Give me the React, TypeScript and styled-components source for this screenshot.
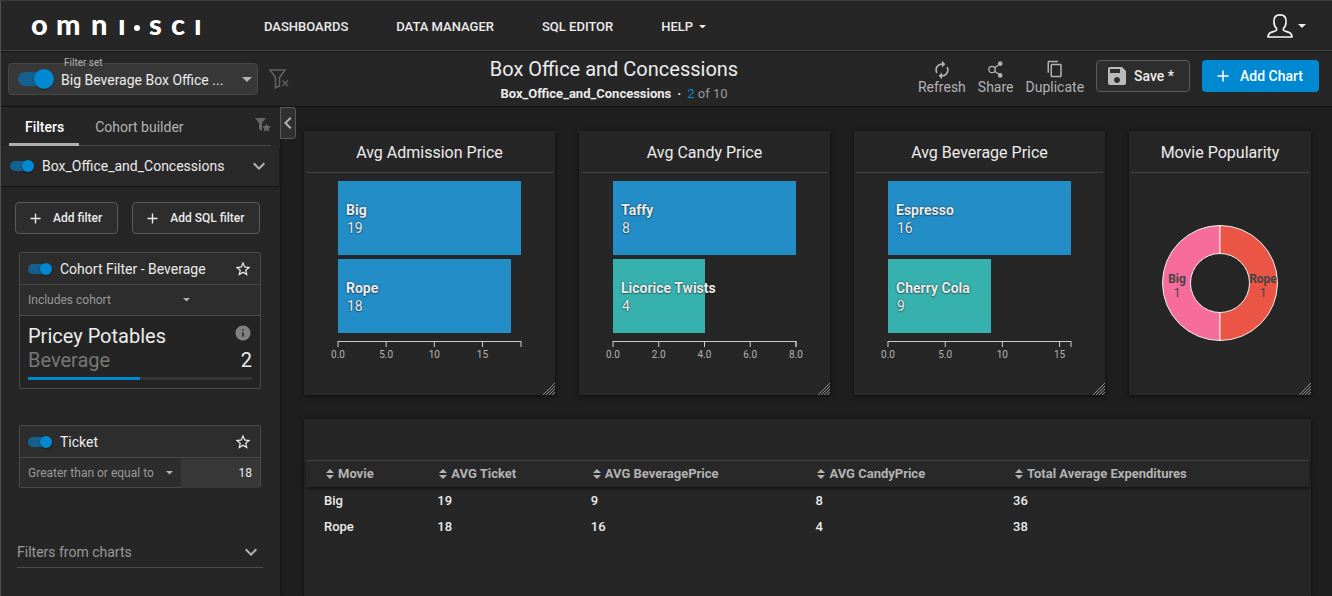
import React from "react";
import styled, { createGlobalStyle, css } from "styled-components";
import {
  MdAutorenew,
  MdChevronLeft,
  MdContentCopy,
  MdExpandMore,
  MdInfo,
  MdSave,
  MdStarBorder,
} from "react-icons/md";

const c = {
  page: "#1e1e1e",
  panel: "#262626",
  raised: "#2d2d2d",
  field: "#383838",
  line: "#444444",
  strong: "#ececec",
  muted: "#b3b3b3",
  dim: "#999999",
  faint: "#777777",
  blue: "#0088d1",
  track: "#14608e",
  barBlue: "#238dc8",
  barTeal: "#36b1ad",
  pink: "#f66d9b",
  red: "#ea5545",
};

const GlobalStyle = createGlobalStyle`
  *, *::before, *::after { box-sizing: border-box; }
  body {
    margin: 0;
    background: ${c.page};
    color: ${c.strong};
    font-family: Roboto, "Liberation Sans", sans-serif;
    font-size: 14px;
    -webkit-font-smoothing: antialiased;
  }
  button, select, input { font: inherit; color: inherit; margin: 0; }
  button { cursor: pointer; padding: 0; }
  a { color: inherit; text-decoration: none; }
  h1, h2, p { margin: 0; font-weight: 400; }
  svg { display: block; flex: none; }
`;

const Page = styled.div`
  display: flex;
  flex-direction: column;
  height: 100vh;
  min-height: 480px;
  overflow: hidden;
  background: ${c.page};
  border-top: 1px solid #3b3b3f;
  border-left: 1px solid #505050;
`;

/* ---------- top navigation ---------- */

const TopBar = styled.header`
  display: flex;
  align-items: center;
  flex: none;
  height: 50px;
  padding: 0 26px 0 30px;
  background: ${c.panel};
  border-bottom: 1px solid ${c.line};
`;

const LogoText = styled.text`
  font-family: Lato, sans-serif;
  font-weight: 900;
  font-size: 29px;
  fill: #ffffff;
`;

const Nav = styled.nav`
  display: flex;
  align-items: center;
  gap: 48px;
  margin-left: 50px;
  padding-top: 2px;
  font-size: 13px;
  font-weight: 500;
  line-height: 20px;
`;

const NavLink = styled.a`
  display: flex;
  align-items: center;
  gap: 6px;
  text-transform: uppercase;
`;

const UserButton = styled.button`
  display: flex;
  align-items: center;
  gap: 5px;
  margin-left: auto;
  background: none;
  border: 0;
`;

/* ---------- dashboard toolbar ---------- */

const Toolbar = styled.div`
  display: flex;
  flex: none;
  height: 56px;
  padding: 8px 13px 0 7px;
  background: ${c.panel};
  border-top: 1px solid #151515;
  border-bottom: 1px solid #131313;
`;

const FilterSetArea = styled.div`
  display: flex;
  align-items: center;
  flex: none;
  gap: 11px;
  width: 302px;
  height: 32px;
  margin-top: 3px;
`;

const FilterSetBox = styled.div`
  position: relative;
  display: flex;
  align-items: center;
  width: 250px;
  height: 32px;
  padding: 0 5px 0 9px;
  gap: 7px;
  background: ${c.field};
  border: 1px solid #474747;
  border-radius: 4px;
`;

const FilterSetLabel = styled.label`
  position: absolute;
  top: -7px;
  left: 55px;
  font-size: 10px;
  line-height: 12px;
  color: ${c.muted};
`;

const SelectWrap = styled.span<{ $caretRight?: number }>`
  display: grid;
  flex: 1;
  min-width: 0;
  align-items: center;
  > * { grid-area: 1 / 1; }
  > svg {
    justify-self: end;
    margin-right: ${(p) => p.$caretRight ?? 0}px;
    pointer-events: none;
  }
`;

const Select = styled.select<{ $small?: boolean }>`
  appearance: none;
  width: 100%;
  height: 30px;
  padding: ${(p) => (p.$small ? 0 : 2)}px 0 0;
  border: 0;
  outline: 0;
  background: none;
  font-size: ${(p) => (p.$small ? 12 : 14)}px;
  color: ${(p) => (p.$small ? c.dim : c.strong)};
`;

const Switch = styled.input<{ $large?: boolean }>`
  appearance: none;
  position: relative;
  flex: none;
  width: ${(p) => (p.$large ? 36 : 24)}px;
  height: ${(p) => (p.$large ? 20 : 12)}px;
  cursor: pointer;
  &::before {
    content: "";
    position: absolute;
    top: ${(p) => (p.$large ? 3 : 1)}px;
    left: 0;
    width: ${(p) => (p.$large ? 32 : 22)}px;
    height: ${(p) => (p.$large ? 14 : 10)}px;
    border-radius: 7px;
    background: ${c.track};
  }
  &::after {
    content: "";
    position: absolute;
    top: 0;
    right: 0;
    width: ${(p) => (p.$large ? 20 : 12)}px;
    height: ${(p) => (p.$large ? 20 : 12)}px;
    border-radius: 50%;
    background: ${c.blue};
    box-shadow: 0 1px 2px rgba(0, 0, 0, 0.4);
  }
`;

const Heading = styled.div`
  flex: 1;
  min-width: 0;
  text-align: center;
  white-space: nowrap;
`;

const Title = styled.h1`
  font-size: 20px;
  line-height: 18px;
`;

const SubTitle = styled.p`
  display: flex;
  justify-content: center;
  gap: 6px;
  margin-top: 7px;
  font-size: 13px;
  line-height: 18px;
  color: ${c.dim};
  strong { font-weight: 700; color: ${c.strong}; }
  b { font-weight: 400; color: ${c.blue}; }
`;

const Actions = styled.div`
  display: flex;
  align-items: flex-start;
  flex: none;
  gap: 12px;
`;

const ToolButton = styled.button`
  display: flex;
  flex-direction: column;
  align-items: center;
  gap: 1px;
  background: none;
  border: 0;
  font-size: 14px;
  line-height: 16px;
  color: ${c.muted};
`;

const IconSlot = styled.span`
  display: grid;
  place-items: center;
  height: 18px;
`;

const Button = styled.button<{ $primary?: boolean; $compact?: boolean }>`
  display: flex;
  align-items: center;
  height: 32px;
  border-radius: 4px;
  white-space: nowrap;
  ${(p) =>
    p.$primary
      ? css`
          padding: 0 16px 0 15px;
          gap: 11px;
          color: #ffffff;
          background: ${c.blue};
          border: 0;
        `
      : css`
          padding: 0 15px 0 ${p.$compact ? 14 : 8}px;
          gap: ${p.$compact ? 12 : 5}px;
          color: ${c.strong};
          background: ${c.raised};
          border: 1px solid #5a5a5a;
        `}
  font-size: ${(p) => (p.$compact ? 12 : 14)}px;
  font-weight: 500;
`;

/* ---------- sidebar ---------- */

const Body = styled.div`
  display: flex;
  flex: 1;
  min-height: 0;
`;

const Sidebar = styled.aside`
  flex: none;
  width: 279px;
  padding-right: 1px;
  background: ${c.panel};
  box-shadow: 1px 0 3px rgba(0, 0, 0, 0.35);
`;

const Tabs = styled.div`
  display: flex;
  height: 39px;
  margin: 0 8px;
  border-bottom: 1px solid #4a4a4a;
  > svg { margin: 11px 0 0 auto; }
`;

const Tab = styled.button<{ $active?: boolean }>`
  height: 39px;
  padding: 3px 15px 0 16px;
  background: none;
  border: 0;
  border-bottom: 3px solid ${(p) => (p.$active ? "#b0b0b0" : "transparent")};
  font-weight: ${(p) => (p.$active ? 500 : 400)};
  color: ${(p) => (p.$active ? "#ffffff" : c.muted)};
`;

const SourceRow = styled.div`
  display: flex;
  align-items: center;
  justify-content: space-between;
  height: 40px;
  padding: 0 8px 0 9px;
  background: #292929;
  box-shadow: 0 1px 2px rgba(0, 0, 0, 0.5);
`;

const SwitchLabel = styled.label`
  display: flex;
  align-items: center;
  gap: 8px;
`;

const PlainButton = styled.button`
  display: grid;
  place-items: center;
  background: none;
  border: 0;
  color: ${c.muted};
`;

const AddRow = styled.div`
  display: flex;
  gap: 14px;
  padding: 16px 14px 0;
`;

const FilterCard = styled.section`
  margin: 18px 18px 0;
  border: 1px solid #4a4a4a;
  border-radius: 2px;
  background: ${c.raised};
  & + & { margin-top: 36px; }
`;

const CardHead = styled.div`
  display: flex;
  align-items: center;
  justify-content: space-between;
  height: 32px;
  padding: 0 8px;
  border-bottom: 1px solid #4a4a4a;
`;

const CohortRow = styled.div`
  height: 31px;
  padding: 0 8px;
  display: flex;
  border-bottom: 1px solid #4a4a4a;
`;

const CohortBody = styled.div`
  padding: 8px;
  background: #242424;
  font-size: 20px;
  line-height: 24px;
`;

const SplitLine = styled.div<{ $faint?: boolean }>`
  display: flex;
  align-items: flex-start;
  justify-content: space-between;
  color: ${(p) => (p.$faint ? c.faint : c.strong)};
  b { font-weight: 400; color: ${c.strong}; }
`;

const Meter = styled.div`
  height: 3px;
  margin-top: 5px;
  background: #363636;
`;

const MeterFill = styled.div`
  height: 3px;
  background: ${c.blue};
`;

const ConditionRow = styled.div`
  display: grid;
  grid-template-columns: 161px 1fr;
  height: 29px;
  align-items: center;
`;

const ConditionSelect = styled.div`
  display: flex;
  padding: 0 8px;
`;

const ValueInput = styled.input`
  width: 100%;
  height: 29px;
  padding: 0 8px;
  border: 0;
  outline: 0;
  background: ${c.field};
  font-size: 12px;
  text-align: right;
`;

const ChartFilters = styled.button`
  display: flex;
  align-items: center;
  justify-content: space-between;
  width: 246px;
  height: 31px;
  margin: 49px 16px 0;
  background: none;
  border: 0;
  border-bottom: 1px solid #4a4a4a;
  color: ${c.dim};
  svg { color: ${c.muted}; }
`;

/* ---------- dashboard ---------- */

const Main = styled.main`
  position: relative;
  display: flex;
  flex: 1;
  flex-direction: column;
  gap: 24px;
  min-width: 0;
  padding: 24px 21px 0 24px;
`;

const CollapseButton = styled.button`
  position: absolute;
  top: 0;
  left: 0;
  display: grid;
  place-content: center;
  width: 16px;
  height: 32px;
  overflow: hidden;
  background: #303030;
  border: 1px solid #5a5a5a;
  border-radius: 0 3px 3px 0;
  color: ${c.muted};
`;

const Charts = styled.div`
  display: grid;
  flex: none;
  grid-template-columns: 251fr 251fr 251fr 182fr;
  gap: 24px;
`;

const Card = styled.section`
  position: relative;
  display: flex;
  flex-direction: column;
  padding: 0 2px;
  background: ${c.panel};
  box-shadow: 0 1px 4px rgba(0, 0, 0, 0.6);
`;

const ChartCard = styled(Card)`
  height: 264px;
`;

const TableCard = styled(Card)`
  flex: 1;
  min-height: 0;
`;

const CardTitle = styled.h2`
  flex: none;
  height: 42px;
  border-bottom: 1px solid ${c.line};
  font-size: 16px;
  line-height: 43px;
  text-align: center;
  white-space: nowrap;
`;

const Grip = styled.svg`
  position: absolute;
  right: 0;
  bottom: 0;
`;

const BarArea = styled.div`
  display: flex;
  flex-direction: column;
  gap: 4px;
  padding: 8px 32px 0;
`;

const Bar = styled.div`
  display: flex;
  flex-direction: column;
  justify-content: center;
  height: 74px;
  padding: 2px 8px 0;
  line-height: 18px;
  white-space: nowrap;
  text-shadow: 0 0 2px rgba(0, 0, 0, 0.6), 0 1px 1px rgba(0, 0, 0, 0.3);
  span { padding-left: 1px; }
`;

const AxisSvg = styled.svg`
  overflow: visible;
  margin-top: 4px;
  width: 100%;
  line { stroke: #cccccc; }
  text { fill: ${c.muted}; font-size: 10px; text-anchor: middle; }
`;

const DonutArea = styled.div`
  display: grid;
  flex: 1;
  place-items: center;
  padding-bottom: 2px;
`;

const DonutSvg = styled.svg`
  overflow: visible;
  path { stroke: #f2f2f2; }
  text { fill: #444444; font-size: 12px; text-anchor: middle; }
`;

const Table = styled.table`
  width: 100%;
  border-collapse: separate;
  border-spacing: 0;
  table-layout: fixed;
  font-size: 13px;
  line-height: 16px;
`;

const HeadRow = styled.tr`
  height: 26px;
  background: #282828;
  box-shadow: 0 2px 3px rgba(0, 0, 0, 0.45);
`;

const Th = styled.th`
  padding: 0 0 0 18px;
  text-align: left;
  font-weight: 700;
  color: ${c.muted};
`;

const SortButton = styled.button`
  display: flex;
  align-items: center;
  gap: 4px;
  padding-left: 2px;
  background: none;
  border: 0;
`;

const Td = styled.td`
  height: 26px;
  padding: 2px 0 0 18px;
  font-weight: 500;
`;

/* ---------- icons ---------- */

const Caret = ({ w = 8, color = c.strong }: { w?: number; color?: string }) => (
  <svg width={w} height={w / 2} viewBox="0 0 8 4" fill={color} aria-hidden>
    <path d="M0 0h8L4 4z" />
  </svg>
);

const Plus = ({ size = 12 }: { size?: number }) => (
  <svg width={size} height={size} viewBox="0 0 12 12" stroke="currentColor" strokeWidth="1.5" aria-hidden>
    <path d="M6 0.5v11M0.5 6h11" />
  </svg>
);

const Logo = () => (
  <svg width="183" height="44" viewBox="0 0 183 44" role="img" aria-label="omni·sci">
    <LogoText x="0 25 60 87" y="31">omnı</LogoText>
    <circle cx="106" cy="24" r="3" fill="#ffffff" />
    <LogoText x="118 140 163" y="31">scı</LogoText>
  </svg>
);

const UserIcon = () => (
  <svg width="26" height="24" viewBox="0 0 26 24" fill="none" stroke="#f5f5f5" strokeWidth="1.6" strokeLinejoin="round" aria-hidden>
    <path d="M9.6 14.6C7.9 13 6.9 10.600 6.900 7.400C6.900 3.400 9.300 0.900 13 0.900S19.100 3.400 19.100 7.400C19.100 10.600 18.100 13 16.400 14.600V16.200C17.500 17.300 20.200 17.600 22.200 18.500C24.200 19.400 24.900 20.700 25.100 23H0.900C1.100 20.700 1.800 19.400 3.800 18.500C5.800 17.600 8.500 17.300 9.600 16.200Z" />
  </svg>
);

const FilterClearIcon = () => (
  <svg width="21" height="20" viewBox="0 0 21 20" fill="none" stroke="#606060" strokeWidth="1.6" aria-hidden>
    <path d="M1 1H16L10.500 8.500V17L6.500 18.800V8.500Z" />
    <path d="M13.500 11.500L19 17M19 11.500L13.500 17" strokeWidth="1.300" />
  </svg>
);

const FilterStarIcon = () => (
  <svg width="16" height="14" viewBox="0 0 16 14" fill="#666666" aria-hidden>
    <path d="M0 0H11L7 5V13L4 11V5Z" />
    <path d="M11.500 5.400L12.900 8L15.900 8.500L13.700 10.600L14.200 13.600L11.500 12.200L8.800 13.600L9.300 10.600L7.100 8.500L10.100 8Z" />
  </svg>
);

const ShareIcon = () => (
  <svg width="15" height="17" viewBox="0 0 15 17" fill="none" stroke="currentColor" strokeWidth="1.3" aria-hidden>
    <circle cx="4" cy="8.500" r="3.200" />
    <path d="M6.700 6.800L12 3M6.700 10.200L12 14" />
    <circle cx="12.200" cy="2.600" r="1.700" fill="currentColor" />
    <circle cx="12.200" cy="14.400" r="1.700" fill="currentColor" />
  </svg>
);

const SortIcon = () => (
  <svg width="8" height="10" viewBox="0 0 8 10" fill="currentColor" aria-hidden>
    <path d="M0 4H8L4 0Z M0 6H8L4 10Z" />
  </svg>
);

const ResizeGrip = () => (
  <Grip width="12" height="12" viewBox="0 0 12 12" stroke="#8a8a8a" aria-hidden>
    <path d="M0 12L12 0M3 12L12 3M6 12L12 6M9 12L12 9" />
  </Grip>
);

/* ---------- charts ---------- */

type Datum = { name: string; value: number; color: string };
type BarChartProps = { title: string; max: number; ticks: [number, string][]; data: Datum[] };

const BarChart = ({ title, max, ticks, data }: BarChartProps) => (
  <ChartCard>
    <CardTitle>{title}</CardTitle>
    <BarArea>
      {data.map((d) => (
        <Bar key={d.name} style={{ width: `${(d.value / max) * 100}%`, background: d.color }}>
          <strong>{d.name}</strong>
          <span>{d.value}</span>
        </Bar>
      ))}
      <AxisSvg height="20">
        <line x1="0" x2="100%" y1="0.5" y2="0.5" />
        <line x1="100%" x2="100%" y1="0" y2="6" />
        {ticks.map(([v, label]) => (
          <React.Fragment key={label}>
            <line x1={`${(v / max) * 100}%`} x2={`${(v / max) * 100}%`} y1="0" y2="6" />
            <text x={`${(v / max) * 100}%`} y="17">{label}</text>
          </React.Fragment>
        ))}
      </AxisSvg>
    </BarArea>
    <ResizeGrip />
  </ChartCard>
);

const barCharts: BarChartProps[] = [
  {
    title: "Avg Admission Price",
    max: 19,
    ticks: [[0, "0.0"], [5, "5.0"], [10, "10"], [15, "15"]],
    data: [
      { name: "Big", value: 19, color: c.barBlue },
      { name: "Rope", value: 18, color: c.barBlue },
    ],
  },
  {
    title: "Avg Candy Price",
    max: 8,
    ticks: [[0, "0.0"], [2, "2.0"], [4, "4.0"], [6, "6.0"], [8, "8.0"]],
    data: [
      { name: "Taffy", value: 8, color: c.barBlue },
      { name: "Licorice Twists", value: 4, color: c.barTeal },
    ],
  },
  {
    title: "Avg Beverage Price",
    max: 16,
    ticks: [[0, "0.0"], [5, "5.0"], [10, "10"], [15, "15"]],
    data: [
      { name: "Espresso", value: 16, color: c.barBlue },
      { name: "Cherry Cola", value: 9, color: c.barTeal },
    ],
  },
];

const columns: [string, string][] = [
  ["Movie", "11.3%"],
  ["AVG Ticket", "15.3%"],
  ["AVG BeveragePrice", "22.4%"],
  ["AVG CandyPrice", "19.7%"],
  ["Total Average Expenditures", "31.3%"],
];

const rows = [
  ["Big", "19", "9", "8", "36"],
  ["Rope", "18", "16", "4", "38"],
];

export default function App() {
  return (
    <>
      <GlobalStyle />
      <Page>
        <TopBar>
          <Logo />
          <Nav>
            <NavLink href="#dashboards">Dashboards</NavLink>
            <NavLink href="#data">Data Manager</NavLink>
            <NavLink href="#sql">SQL Editor</NavLink>
            <NavLink href="#help">Help <Caret w={7} /></NavLink>
          </Nav>
          <UserButton aria-label="Account">
            <UserIcon />
            <Caret />
          </UserButton>
        </TopBar>

        <Toolbar>
          <FilterSetArea>
            <FilterSetBox>
              <FilterSetLabel htmlFor="filter-set">Filter set</FilterSetLabel>
              <Switch type="checkbox" $large defaultChecked aria-label="Enable filter set" />
              <SelectWrap>
                <Select id="filter-set">
                  <option>Big Beverage Box Office ...</option>
                </Select>
                <Caret w={10} color={c.muted} />
              </SelectWrap>
            </FilterSetBox>
            <PlainButton aria-label="Clear filters"><FilterClearIcon /></PlainButton>
          </FilterSetArea>
          <Heading>
            <Title>Box Office and Concessions</Title>
            <SubTitle>
              <strong>Box_Office_and_Concessions</strong>
              <strong>·</strong>
              <span><b>2</b> of 10</span>
            </SubTitle>
          </Heading>
          <Actions>
            <ToolButton><IconSlot><MdAutorenew size={20} /></IconSlot>Refresh</ToolButton>
            <ToolButton><IconSlot><ShareIcon /></IconSlot>Share</ToolButton>
            <ToolButton><IconSlot><MdContentCopy size={18} /></IconSlot>Duplicate</ToolButton>
            <Button><MdSave size={24} color="#bbbbbb" />Save *</Button>
            <Button $primary><Plus />Add Chart</Button>
          </Actions>
        </Toolbar>

        <Body>
          <Sidebar>
            <Tabs>
              <Tab $active>Filters</Tab>
              <Tab>Cohort builder</Tab>
              <FilterStarIcon />
            </Tabs>
            <SourceRow>
              <SwitchLabel>
                <Switch type="checkbox" defaultChecked />
                Box_Office_and_Concessions
              </SwitchLabel>
              <PlainButton aria-label="Collapse source"><MdExpandMore size={24} /></PlainButton>
            </SourceRow>
            <AddRow>
              <Button $compact><Plus size={11} />Add filter</Button>
              <Button $compact><Plus size={11} />Add SQL filter</Button>
            </AddRow>

            <FilterCard>
              <CardHead>
                <SwitchLabel>
                  <Switch type="checkbox" defaultChecked />
                  Cohort Filter - Beverage
                </SwitchLabel>
                <PlainButton aria-label="Favorite cohort filter"><MdStarBorder size={18} color="#f0f0f0" /></PlainButton>
              </CardHead>
              <CohortRow>
                <SelectWrap $caretRight={62}>
                  <Select $small aria-label="Cohort condition">
                    <option>Includes cohort</option>
                  </Select>
                  <Caret w={7} color={c.muted} />
                </SelectWrap>
              </CohortRow>
              <CohortBody>
                <SplitLine>Pricey Potables <MdInfo size={18} color="#808080" /></SplitLine>
                <SplitLine $faint>Beverage <b>2</b></SplitLine>
                <Meter><MeterFill style={{ width: "50%" }} /></Meter>
              </CohortBody>
            </FilterCard>

            <FilterCard>
              <CardHead>
                <SwitchLabel>
                  <Switch type="checkbox" defaultChecked />
                  Ticket
                </SwitchLabel>
                <PlainButton aria-label="Favorite ticket filter"><MdStarBorder size={18} color="#f0f0f0" /></PlainButton>
              </CardHead>
              <ConditionRow>
                <ConditionSelect>
                  <SelectWrap>
                    <Select $small aria-label="Ticket condition">
                      <option>Greater than or equal to</option>
                    </Select>
                    <Caret w={7} color={c.muted} />
                  </SelectWrap>
                </ConditionSelect>
                <ValueInput defaultValue="18" aria-label="Ticket value" />
              </ConditionRow>
            </FilterCard>

            <ChartFilters>Filters from charts <MdExpandMore size={24} /></ChartFilters>
          </Sidebar>

          <Main>
            <CollapseButton aria-label="Collapse sidebar"><MdChevronLeft size={24} /></CollapseButton>
            <Charts>
              {barCharts.map((b) => <BarChart key={b.title} {...b} />)}
              <ChartCard>
                <CardTitle>Movie Popularity</CardTitle>
                <DonutArea>
                  <DonutSvg width="116" height="116" viewBox="-58 -58 116 116">
                    <path fill={c.pink} d="M0 -57.500A57.500 57.500 0 0 0 0 57.500V29.500A29.500 29.500 0 0 1 0 -29.500Z" />
                    <path fill={c.red} d="M0 -57.500A57.500 57.500 0 0 1 0 57.500V29.500A29.500 29.500 0 0 0 0 -29.500Z" />
                    <text x="-43" y="0" fontWeight="700">Big</text>
                    <text x="-43" y="14">1</text>
                    <text x="43" y="0" fontWeight="700">Rope</text>
                    <text x="43" y="14">1</text>
                  </DonutSvg>
                </DonutArea>
                <ResizeGrip />
              </ChartCard>
            </Charts>

            <TableCard>
              <CardTitle as="div" />
              <Table>
                <colgroup>
                  {columns.map(([name, width]) => <col key={name} style={{ width }} />)}
                </colgroup>
                <thead>
                  <HeadRow>
                    {columns.map(([name]) => (
                      <Th key={name}><SortButton><SortIcon />{name}</SortButton></Th>
                    ))}
                  </HeadRow>
                </thead>
                <tbody>
                  {rows.map((r) => (
                    <tr key={r[0]}>{r.map((v, i) => <Td key={i}>{v}</Td>)}</tr>
                  ))}
                </tbody>
              </Table>
            </TableCard>
          </Main>
        </Body>
      </Page>
    </>
  );
}
